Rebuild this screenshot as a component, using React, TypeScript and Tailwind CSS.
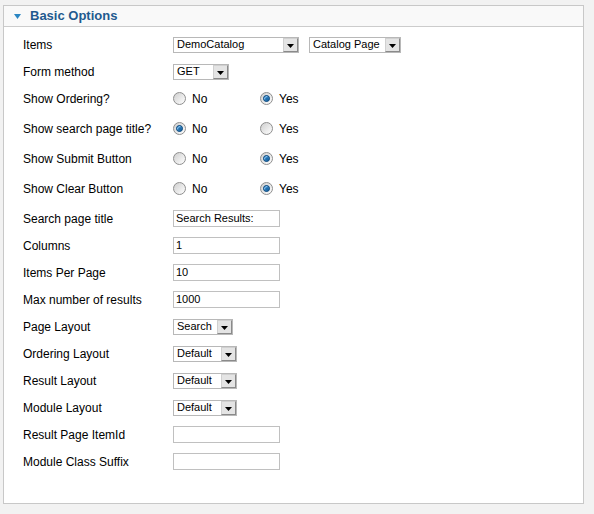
import React from "react";

type Row =
  | { kind: "select"; label: string; selects: { value: string; w: string }[] }
  | { kind: "radio"; label: string; yes: boolean }
  | { kind: "text"; label: string; value: string };

const rows: Row[] = [
  {
    kind: "select",
    label: "Items",
    selects: [
      { value: "DemoCatalog", w: "w-[126px]" },
      { value: "Catalog Page", w: "w-[92px]" },
    ],
  },
  { kind: "select", label: "Form method", selects: [{ value: "GET", w: "w-[56px]" }] },
  { kind: "radio", label: "Show Ordering?", yes: true },
  { kind: "radio", label: "Show search page title?", yes: false },
  { kind: "radio", label: "Show Submit Button", yes: true },
  { kind: "radio", label: "Show Clear Button", yes: true },
  { kind: "text", label: "Search page title", value: "Search Results:" },
  { kind: "text", label: "Columns", value: "1" },
  { kind: "text", label: "Items Per Page", value: "10" },
  { kind: "text", label: "Max number of results", value: "1000" },
  { kind: "select", label: "Page Layout", selects: [{ value: "Search", w: "w-[60px]" }] },
  { kind: "select", label: "Ordering Layout", selects: [{ value: "Default", w: "w-[64px]" }] },
  { kind: "select", label: "Result Layout", selects: [{ value: "Default", w: "w-[64px]" }] },
  { kind: "select", label: "Module Layout", selects: [{ value: "Default", w: "w-[64px]" }] },
  { kind: "text", label: "Result Page ItemId", value: "" },
  { kind: "text", label: "Module Class Suffix", value: "" },
];

const Select = ({ value, w }: { value: string; w: string }) => (
  <div className={`${w} h-[16px] flex items-center border border-[#b8b8b8] bg-white`}>
    <span className="flex-1 pl-[3px] text-[11px] leading-none text-black whitespace-nowrap overflow-hidden">
      {value}
    </span>
    <span className="w-[15px] h-[14px] mr-0 flex items-end justify-center pb-[3px] border border-t-[#d0d0d0] border-l-[#d0d0d0] border-r-[#8a8a8a] border-b-[#8a8a8a] bg-[#e4e4e4]">
      <svg width="7" height="4" viewBox="0 0 7 4">
        <path d="M0 0H7L3.5 4Z" fill="#000" />
      </svg>
    </span>
  </div>
);

const Radio = ({ checked, text }: { checked: boolean; text: string }) => (
  <label className="flex items-center gap-[6px]">
    <span className="w-[13px] h-[13px] rounded-full border border-[#8e8e8e] bg-linear-to-br from-[#cfcfcf] to-white flex items-center justify-center">
      {checked && (
        <span className="w-[7px] h-[7px] rounded-full bg-[#1d6bab] border border-[#0e4a7e] shadow-[inset_1px_1px_1px_rgba(150,210,255,0.9)]" />
      )}
    </span>
    <span className="text-[12px] text-black">{text}</span>
  </label>
);

const App = () => {
  return (
    <div className="w-[594px] h-[514px] bg-[#f2f2f2] pt-[5px] pl-[3px] font-['Liberation_Sans',Arial,sans-serif]">
      <div className="w-[581px] h-[499px] border border-[#c8c8c8] bg-white">
        <div className="h-[21px] flex items-center border-b border-[#cccccc] bg-[#f9f9f9] pl-[10px]">
          <svg width="7" height="5" viewBox="0 0 7 5" className="mr-[9px] mt-[1px]">
            <path d="M0 0H7L3.5 5Z" fill="#2b86c3" />
          </svg>
          <span className="text-[13px] font-bold text-[#1f5a8f]">Basic Options</span>
        </div>

        <div className="pt-[4px] pl-[19px]">
          {rows.map((row) => (
            <div
              key={row.label}
              className={`flex items-center h-[27px] ${row.kind === "radio" ? "mb-[3px]" : ""}`}
            >
              <div className="w-[150px] text-[12px] text-black whitespace-nowrap">{row.label}</div>
              {row.kind === "select" && (
                <div className="flex items-center gap-[10px]">
                  {row.selects.map((s) => (
                    <Select key={s.value} value={s.value} w={s.w} />
                  ))}
                </div>
              )}
              {row.kind === "radio" && (
                <div className="flex items-center">
                  <div className="w-[87px]">
                    <Radio checked={!row.yes} text="No" />
                  </div>
                  <Radio checked={row.yes} text="Yes" />
                </div>
              )}
              {row.kind === "text" && (
                <div className="w-[107px] h-[17px] flex items-center border border-[#c0c0c0] bg-white pl-[2px] text-[11px] text-black">
                  {row.value}
                </div>
              )}
            </div>
          ))}
        </div>
      </div>
    </div>
  );
};

export default App;
